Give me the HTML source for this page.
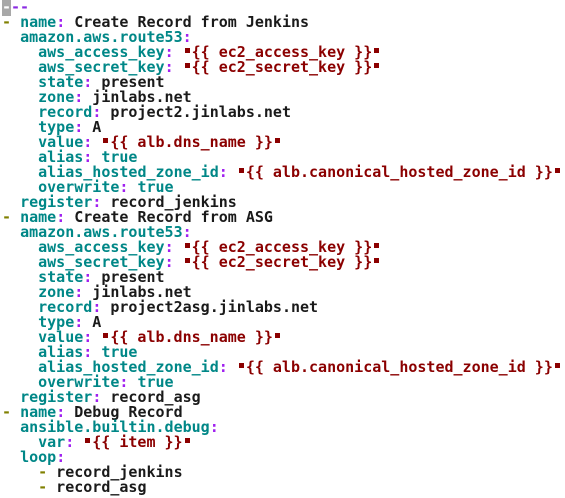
<!DOCTYPE html>
<html><head><meta charset="utf-8"><style>
html,body{margin:0;padding:0;background:#fff;width:565px;height:498px;overflow:hidden}
pre{margin:0;padding:0 0 0 2px;font-family:"DejaVu Sans Mono","Liberation Mono",monospace;font-size:15px;line-height:15px;font-weight:bold;color:#1a1a1a;letter-spacing:0}
.k{color:#008787}.c{color:#a020f0}.s{color:#8b0000}.d{color:#808000}.p{color:#8a2be2}
.q{display:inline-block;width:9px;height:15px;position:relative;vertical-align:top}
.q:before{content:"";position:absolute;left:2px;top:3px;width:5px;height:5px;background:#8b0000}
.cur{background:#a8a8a8;color:#fff}
</style></head><body><pre><span class="cur">-</span><span class="p">--</span>
<span class="d">-</span> <span class="k">name</span><span class="c">:</span> Create Record from Jenkins
  <span class="k">amazon.aws.route53</span><span class="c">:</span>
    <span class="k">aws_access_key</span><span class="c">:</span> <span class="q"></span><span class="s">{{ ec2_access_key }}</span><span class="q"></span>
    <span class="k">aws_secret_key</span><span class="c">:</span> <span class="q"></span><span class="s">{{ ec2_secret_key }}</span><span class="q"></span>
    <span class="k">state</span><span class="c">:</span> present
    <span class="k">zone</span><span class="c">:</span> jinlabs.net
    <span class="k">record</span><span class="c">:</span> project2.jinlabs.net
    <span class="k">type</span><span class="c">:</span> A
    <span class="k">value</span><span class="c">:</span> <span class="q"></span><span class="s">{{ alb.dns_name }}</span><span class="q"></span>
    <span class="k">alias</span><span class="c">:</span> <span class="k">true</span>
    <span class="k">alias_hosted_zone_id</span><span class="c">:</span> <span class="q"></span><span class="s">{{ alb.canonical_hosted_zone_id }}</span><span class="q"></span>
    <span class="k">overwrite</span><span class="c">:</span> <span class="k">true</span>
  <span class="k">register</span><span class="c">:</span> record_jenkins
<span class="d">-</span> <span class="k">name</span><span class="c">:</span> Create Record from ASG
  <span class="k">amazon.aws.route53</span><span class="c">:</span>
    <span class="k">aws_access_key</span><span class="c">:</span> <span class="q"></span><span class="s">{{ ec2_access_key }}</span><span class="q"></span>
    <span class="k">aws_secret_key</span><span class="c">:</span> <span class="q"></span><span class="s">{{ ec2_secret_key }}</span><span class="q"></span>
    <span class="k">state</span><span class="c">:</span> present
    <span class="k">zone</span><span class="c">:</span> jinlabs.net
    <span class="k">record</span><span class="c">:</span> project2asg.jinlabs.net
    <span class="k">type</span><span class="c">:</span> A
    <span class="k">value</span><span class="c">:</span> <span class="q"></span><span class="s">{{ alb.dns_name }}</span><span class="q"></span>
    <span class="k">alias</span><span class="c">:</span> <span class="k">true</span>
    <span class="k">alias_hosted_zone_id</span><span class="c">:</span> <span class="q"></span><span class="s">{{ alb.canonical_hosted_zone_id }}</span><span class="q"></span>
    <span class="k">overwrite</span><span class="c">:</span> <span class="k">true</span>
  <span class="k">register</span><span class="c">:</span> record_asg
<span class="d">-</span> <span class="k">name</span><span class="c">:</span> Debug Record
  <span class="k">ansible.builtin.debug</span><span class="c">:</span>
    <span class="k">var</span><span class="c">:</span> <span class="q"></span><span class="s">{{ item }}</span><span class="q"></span>
  <span class="k">loop</span><span class="c">:</span>
    <span class="d">-</span> record_jenkins
    <span class="d">-</span> record_asg
</pre></body></html>
